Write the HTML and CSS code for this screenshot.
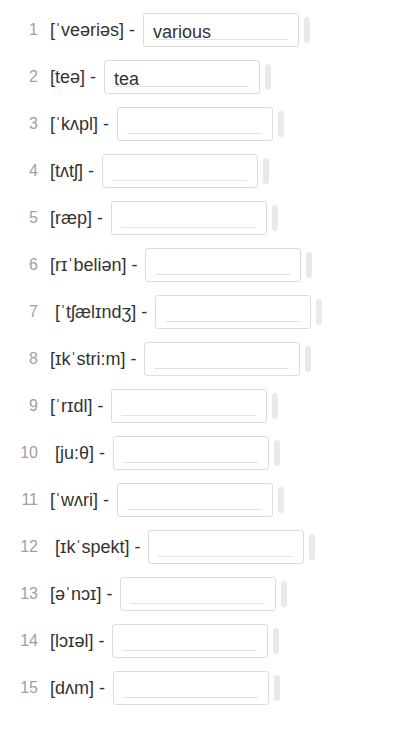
FILE: index.html
```html
<!DOCTYPE html>
<html>
<head>
<meta charset="utf-8">
<link rel="stylesheet" href="styles.css">
</head>
<body>
<div class="list">
  <div class="row"><span class="num">1</span><span class="word">[ˈveəriəs] -</span><div class="box"><span class="fill">various</span></div><span class="bar"></span></div>
  <div class="row"><span class="num">2</span><span class="word">[teə] -</span><div class="box"><span class="fill">tea</span></div><span class="bar"></span></div>
  <div class="row"><span class="num">3</span><span class="word">[ˈkʌpl] -</span><div class="box"><span class="fill"></span></div><span class="bar"></span></div>
  <div class="row"><span class="num">4</span><span class="word">[tʌtʃ] -</span><div class="box"><span class="fill"></span></div><span class="bar"></span></div>
  <div class="row"><span class="num">5</span><span class="word">[ræp] -</span><div class="box"><span class="fill"></span></div><span class="bar"></span></div>
  <div class="row"><span class="num">6</span><span class="word">[rɪˈbeliən] -</span><div class="box"><span class="fill"></span></div><span class="bar"></span></div>
  <div class="row"><span class="num">7</span><span class="word">&nbsp;[ˈtʃælɪndʒ] -</span><div class="box"><span class="fill"></span></div><span class="bar"></span></div>
  <div class="row"><span class="num">8</span><span class="word">[ɪkˈstri:m] -</span><div class="box"><span class="fill"></span></div><span class="bar"></span></div>
  <div class="row"><span class="num">9</span><span class="word">[ˈrɪdl] -</span><div class="box"><span class="fill"></span></div><span class="bar"></span></div>
  <div class="row"><span class="num">10</span><span class="word">&nbsp;[ju:θ] -</span><div class="box"><span class="fill"></span></div><span class="bar"></span></div>
  <div class="row"><span class="num">11</span><span class="word">[ˈwʌri] -</span><div class="box"><span class="fill"></span></div><span class="bar"></span></div>
  <div class="row"><span class="num">12</span><span class="word">&nbsp;[ɪkˈspekt] -</span><div class="box"><span class="fill"></span></div><span class="bar"></span></div>
  <div class="row"><span class="num">13</span><span class="word">[əˈnɔɪ] -</span><div class="box"><span class="fill"></span></div><span class="bar"></span></div>
  <div class="row"><span class="num">14</span><span class="word">[lɔɪəl] -</span><div class="box"><span class="fill"></span></div><span class="bar"></span></div>
  <div class="row"><span class="num">15</span><span class="word">[dʌm] -</span><div class="box"><span class="fill"></span></div><span class="bar"></span></div>
</div>
</body>
</html>
```

FILE: styles.css
```css
html, body {
  margin: 0;
  padding: 0;
  background: #ffffff;
}
body {
  font-family: "Liberation Sans", Arial, sans-serif;
  color: #333333;
}
.list {
  display: flex;
  flex-direction: column;
  gap: 13px;
  padding-top: 13px;
}
.row {
  display: flex;
  align-items: center;
  height: 34px;
}
.num {
  width: 38px;
  text-align: right;
  font-size: 16px;
  color: #a0a0a0;
  margin-right: 12px;
}
.word {
  font-size: 18px;
  white-space: pre;
  color: #333333;
}
.box {
  margin-left: 8px;
  width: 156px;
  height: 34px;
  box-sizing: border-box;
  border: 1px solid #dcdcdc;
  border-radius: 3px;
  padding: 0 10px 6px 9px;
  display: flex;
  align-items: flex-end;
}
.fill {
  flex: 1;
  height: 15px;
  line-height: 14px;
  font-size: 18px;
  color: #333333;
  border-bottom: 1px solid #e2e2e2;
  box-sizing: border-box;
  white-space: nowrap;
}
.bar {
  margin-left: 5px;
  width: 6px;
  height: 26px;
  border-radius: 3px;
  background: #e9e9e9;
}
```
